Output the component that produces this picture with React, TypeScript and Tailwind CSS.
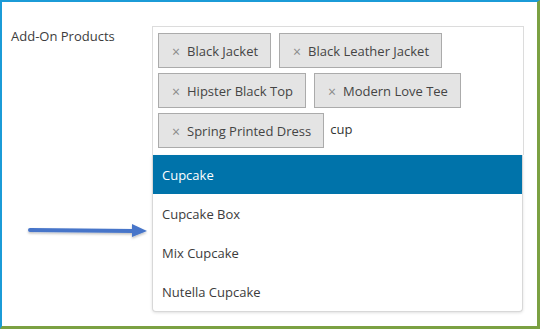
import React from 'react';

const tags = ['Black Jacket', 'Black Leather Jacket', 'Hipster Black Top', 'Modern Love Tee', 'Spring Printed Dress'];
const options = ['Cupcake', 'Cupcake Box', 'Mix Cupcake', 'Nutella Cupcake'];

const App: React.FC = () => {
  return (
    <div className="relative w-[540px] h-[329px] overflow-hidden bg-white border-t-2 border-l-2 border-t-[#1b9bd7] border-l-[#1b9bd7] border-r-[3px] border-b-[3px] border-r-[#7ba142] border-b-[#7ba142] font-['Open_Sans',sans-serif] text-[#3c3c3c]">
      <div className="flex pt-[24px] pl-[9px]">
        <div className="w-[141px] text-[13px] leading-[20px]">Add-On Products</div>

        <div className="relative w-[372px]">
          {/* selection box */}
          <div className="border border-[#dcdcdc] border-b-0 bg-white px-[5px] pt-[6px] pb-[7px] flex flex-wrap gap-x-2 gap-y-[5px] items-center">
            {tags.map((t) => (
              <div
                key={t}
                className="inline-flex items-center h-[35px] border border-[#ababab] bg-[#e4e4e4] pl-[13px] pr-[12px] pt-[2px] text-[13px] text-[#444]"
              >
                <span className="text-[#8a8a8a] text-[14px] mr-[7px] leading-none">×</span>
                {t}
              </div>
            ))}
            <span className="text-[13px] text-[#333] ml-[-2px] pb-[2px]">cup</span>
          </div>

          {/* dropdown */}
          <div className="absolute left-0 top-full w-[371px] bg-white border border-[#d8d8d8] border-t-0 rounded-b-[4px] shadow-[0_1px_3px_rgba(0,0,0,0.12)]">
            {options.map((o, i) => (
              <div
                key={o}
                className={`h-[39px] flex items-center pl-[9px] pt-[2px] text-[13px] ${
                  i === 0 ? 'bg-[#0073aa] text-white' : 'text-[#3c3c3c]'
                }`}
              >
                {o}
              </div>
            ))}
          </div>
        </div>
      </div>

      {/* annotation arrow */}
      <svg className="absolute left-[22px] top-[218px]" width="130" height="24" viewBox="0 0 130 24">
        <defs>
          <filter id="sh" x="-10%" y="-50%" width="120%" height="200%">
            <feDropShadow dx="0" dy="1.5" stdDeviation="1.2" floodColor="#000" floodOpacity="0.25" />
          </filter>
        </defs>
        <g filter="url(#sh)">
          <line x1="6" y1="10" x2="110" y2="11" stroke="#4775c9" strokeWidth="4" strokeLinecap="round" />
          <polygon points="108,4 123,11 108,17" fill="#4775c9" />
        </g>
      </svg>
    </div>
  );
};

export default App;
